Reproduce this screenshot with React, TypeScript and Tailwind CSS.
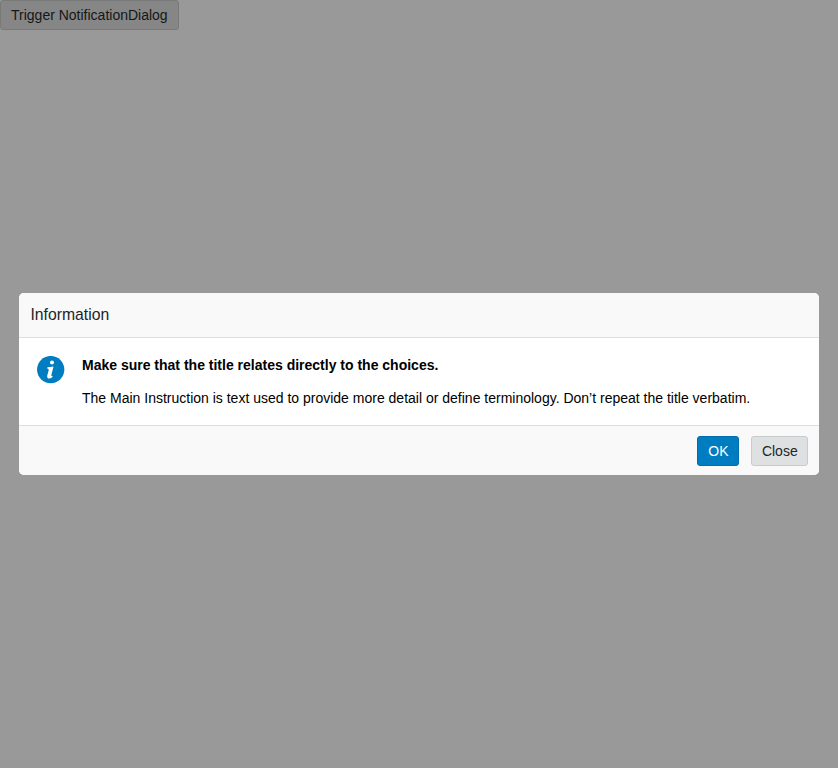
import React from "react";

function InfoIcon() {
  return (
    <svg className="mt-[18px] h-7 w-7 shrink-0" viewBox="0 0 28 28" aria-hidden="true">
      <circle cx="13.7" cy="13.6" r="13.65" fill="#007cc0" />
      <circle cx="15" cy="6.6" r="2" fill="#fff" />
      <path
        d="M10.4 11.3 Q13 10.9 16.1 10.4 Q16.6 10.4 16.4 11.2 L14.4 18.8 Q14 20.6 15.7 19.8 L15.3 21.2 Q12.9 23.1 11 22.4 Q9.6 21.8 10.3 19.3 L11.7 14.2 Q12.1 12.7 10.2 12.6 Z"
        fill="#fff"
      />
    </svg>
  );
}

export default function App() {
  return (
    <div className="relative h-screen w-full overflow-hidden bg-[#999999] font-['Liberation_Sans',Arial,sans-serif] text-sm">
      <button className="flex h-[30px] w-[179px] items-center rounded-[3px] border border-[#787a7a] bg-[#868686] px-2.5 leading-5 whitespace-nowrap text-[#141617]">
        Trigger NotificationDialog
      </button>
      <div className="absolute inset-0 flex items-center justify-center">
        <div role="dialog" className="w-[800px] overflow-hidden rounded-[5px] bg-white">
          <header className="flex h-[45px] items-center border-b border-[#dcdedf] bg-[#f9f9f9] px-[11.4px]">
            <h2 className="text-[15.75px] leading-6 text-[#212527]">Information</h2>
          </header>
          <div className="flex h-[87px] gap-[17px] pl-[18px] text-black">
            <InfoIcon />
            <div className="flex flex-col gap-[13px] pt-[17px] leading-5">
              <strong>Make sure that the title relates directly to the choices.</strong>
              <p>
                The Main Instruction is text used to provide more detail or define terminology. Don’t repeat the title verbatim.
              </p>
            </div>
          </div>
          <footer className="flex h-[50px] items-center justify-end gap-3 border-t border-[#dcdedf] bg-[#f9f9f9] pr-[11px]">
            <button className="h-[30px] w-[42px] rounded-[3px] border border-[#006cab] bg-[#007cc0] pl-[0.8px] leading-5 text-white">
              OK
            </button>
            <button className="h-[30px] w-[57px] rounded-[3px] border border-[#c8cbcc] bg-[#dfe0e1] pl-[0.6px] leading-5 text-[#212527]">
              Close
            </button>
          </footer>
        </div>
      </div>
    </div>
  );
}
